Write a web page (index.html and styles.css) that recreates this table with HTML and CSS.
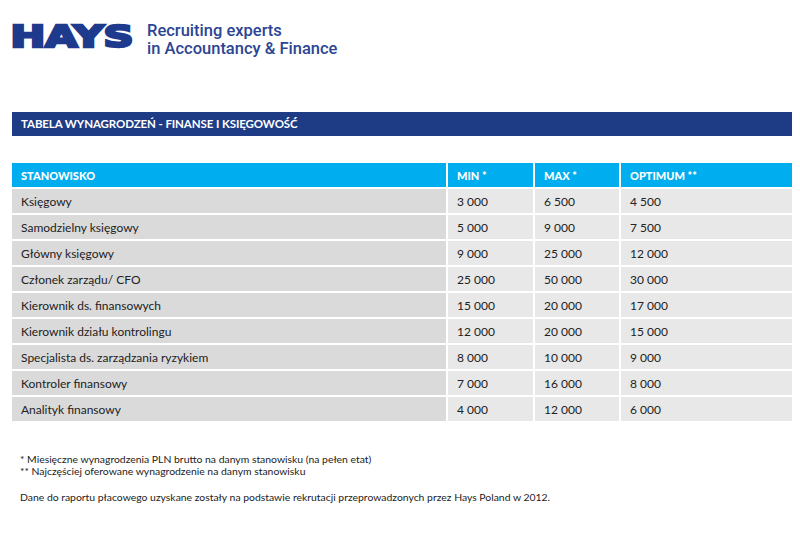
FILE: index.html
```html
<!DOCTYPE html>
<html lang="pl">
<head>
<meta charset="utf-8">
<title>Hays - Tabela wynagrodzeń</title>
<link rel="stylesheet" href="styles.css">
</head>
<body>
<header class="brand">
  <svg class="logo" width="128" height="36" viewBox="0 0 128 36" aria-label="HAYS">
    <text x="1.5" y="32" textLength="123" lengthAdjust="spacingAndGlyphs" class="logo-text">HAYS</text>
  </svg>
  <div class="tagline">
    <div>Recruiting experts</div>
    <div>in Accountancy &amp; Finance</div>
  </div>
</header>

<div class="titlebar">TABELA WYNAGRODZEŃ - FINANSE I KSIĘGOWOŚĆ</div>

<div class="grid">
  <div class="cell head">STANOWISKO</div>
  <div class="cell head">MIN *</div>
  <div class="cell head">MAX *</div>
  <div class="cell head">OPTIMUM **</div>

  <div class="cell pos">Księgowy</div><div class="cell">3 000</div><div class="cell">6 500</div><div class="cell">4 500</div>
  <div class="cell pos">Samodzielny księgowy</div><div class="cell">5 000</div><div class="cell">9 000</div><div class="cell">7 500</div>
  <div class="cell pos">Główny księgowy</div><div class="cell">9 000</div><div class="cell">25 000</div><div class="cell">12 000</div>
  <div class="cell pos">Członek zarządu/ CFO</div><div class="cell">25 000</div><div class="cell">50 000</div><div class="cell">30 000</div>
  <div class="cell pos">Kierownik ds. finansowych</div><div class="cell">15 000</div><div class="cell">20 000</div><div class="cell">17 000</div>
  <div class="cell pos">Kierownik działu kontrolingu</div><div class="cell">12 000</div><div class="cell">20 000</div><div class="cell">15 000</div>
  <div class="cell pos">Specjalista ds. zarządzania ryzykiem</div><div class="cell">8 000</div><div class="cell">10 000</div><div class="cell">9 000</div>
  <div class="cell pos">Kontroler finansowy</div><div class="cell">7 000</div><div class="cell">16 000</div><div class="cell">8 000</div>
  <div class="cell pos">Analityk finansowy</div><div class="cell">4 000</div><div class="cell">12 000</div><div class="cell">6 000</div>
</div>

<footer class="notes">
  <p>* Miesięczne wynagrodzenia PLN brutto na danym stanowisku (na pełen etat)<br>** Najczęściej oferowane wynagrodzenie na danym stanowisku</p>
  <p>Dane do raportu płacowego uzyskane zostały na podstawie rekrutacji przeprowadzonych przez Hays Poland w 2012.</p>
</footer>
</body>
</html>
```

FILE: styles.css
```css
html, body {
  margin: 0;
  padding: 0;
  background: #fff;
}
body {
  font-family: Lato, "Open Sans", "Liberation Sans", sans-serif;
  color: #222;
}
.brand {
  display: flex;
  align-items: flex-start;
  padding: 15px 0 0 9px;
  height: 35px;
}
.logo {
  display: block;
  flex: none;
  overflow: visible;
}
.logo-text {
  font-family: "DejaVu Sans", sans-serif;
  font-weight: 700;
  font-size: 30.5px;
  fill: #1e3a8c;
  stroke: #1e3a8c;
  stroke-width: 2.6px;
  stroke-linejoin: miter;
}
.tagline {
  margin: 7px 0 0 10px;
  font-family: Roboto, "Open Sans", "Liberation Sans", sans-serif;
  font-weight: 500;
  font-size: 16.5px;
  line-height: 18px;
  color: #2b4594;
}
.titlebar {
  margin: 62px 8px 0 12px;
  height: 24px;
  line-height: 24px;
  padding-left: 9px;
  background: #1d3c85;
  color: #fff;
  font-weight: 700;
  font-size: 11.5px;
  letter-spacing: -0.1px;
}
.grid {
  margin: 27px 8px 0 12px;
  display: grid;
  grid-template-columns: 434px 85px 84px 171px;
  grid-auto-rows: 24px;
  gap: 2px;
}
.cell {
  display: flex;
  align-items: center;
  padding-left: 9px;
  background: #e8e8e9;
  font-size: 12px;
  color: #222;
}
.cell.pos {
  background: #dadadb;
}
.cell.head {
  background: #00adee;
  color: #fff;
  font-weight: 900;
  font-size: 11px;
}
.notes {
  margin: 32px 0 0 20px;
  font-size: 10.4px;
  line-height: 12px;
  color: #222;
}
.notes p {
  margin: 0 0 14px;
}
```
